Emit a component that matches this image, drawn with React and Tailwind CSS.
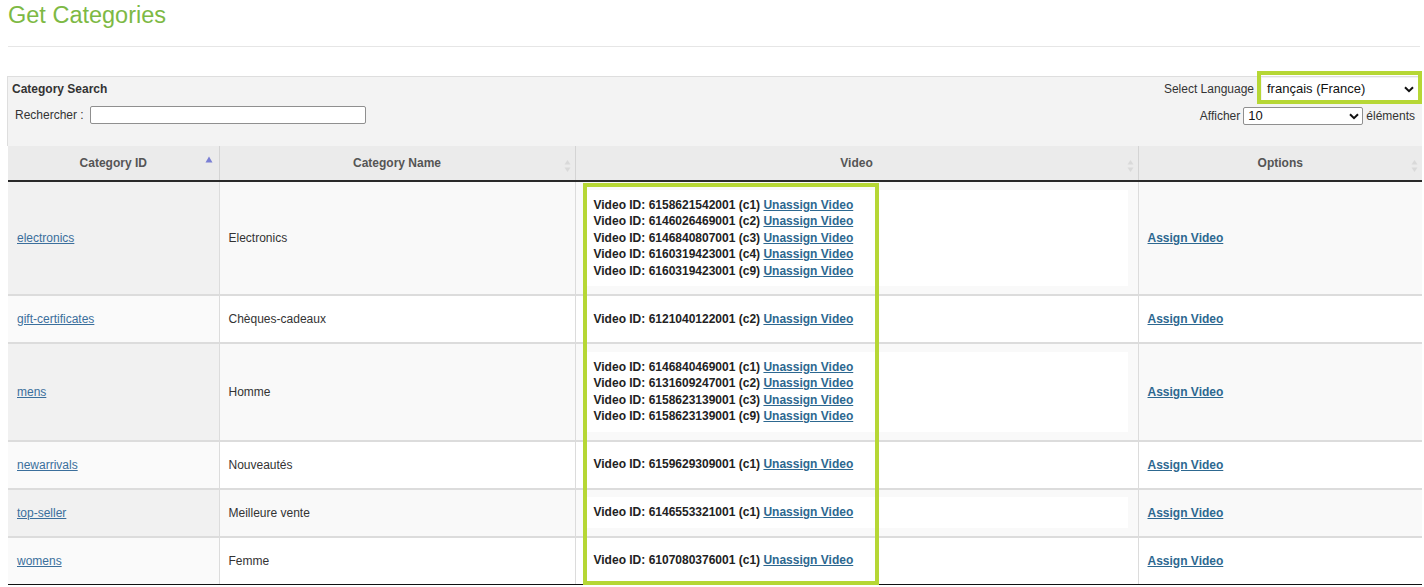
import React from 'react';

const rows = [
  { id: 'electronics', name: 'Electronics', videos: [['6158621542001', 'c1'], ['6146026469001', 'c2'], ['6146840807001', 'c3'], ['6160319423001', 'c4'], ['6160319423001', 'c9']] },
  { id: 'gift-certificates', name: 'Chèques-cadeaux', videos: [['6121040122001', 'c2']] },
  { id: 'mens', name: 'Homme', videos: [['6146840469001', 'c1'], ['6131609247001', 'c2'], ['6158623139001', 'c3'], ['6158623139001', 'c9']] },
  { id: 'newarrivals', name: 'Nouveautés', videos: [['6159629309001', 'c1']] },
  { id: 'top-seller', name: 'Meilleure vente', videos: [['6146553321001', 'c1']] },
  { id: 'womens', name: 'Femme', videos: [['6107080376001', 'c1']] },
];

function Chevron({ className }) {
  return (
    <svg className={className} width="10" height="7" viewBox="0 0 10 7">
      <path d="M1 1.2 L5 5.2 L9 1.2" fill="none" stroke="#111" strokeWidth="2" />
    </svg>
  );
}

function SortBoth() {
  return (
    <svg width="7" height="14" viewBox="0 0 7 14" className="absolute right-[4px] top-[13px]">
      <path d="M3.5 1 L6.5 5.5 L0.5 5.5 Z" fill="#d9d9d9" />
      <path d="M3.5 13 L6.5 8.5 L0.5 8.5 Z" fill="#d9d9d9" />
    </svg>
  );
}

function SortAsc() {
  return (
    <svg width="8" height="7" viewBox="0 0 8 7" className="absolute right-[6px] top-[10px]">
      <path d="M4 0.5 L7.5 6.5 L0.5 6.5 Z" fill="#7a7fd4" />
    </svg>
  );
}

export default function App() {
  return (
    <div className="relative w-[1424px] h-[587px] overflow-hidden bg-white font-['Liberation_Sans',Arial,sans-serif] text-[12px] text-[#333]">
      <h1 className="px-2 pt-[1px] text-[23.5px] leading-[28px] text-[#7db944]">Get Categories</h1>
      <div className="ml-2 mr-[4px] mt-[17px] border-t border-[#e6e6e6]" />

      <div className="ml-[7px] mt-[29px] w-[1415px]">
        <div className="flex h-[70px] justify-between border-l border-t border-[#dedede] bg-[#f3f3f3]">
          <div className="flex flex-col">
            <div className="pl-[4px] pt-[5px] font-bold leading-[14px] text-[#333]">Category Search</div>
            <div className="mt-[10px] flex items-center pl-[7px]">
              <span className="text-[#333]">Rechercher :</span>
              <div className="ml-[6px] h-[18px] w-[276px] rounded-[2px] border border-[#8f8f8f] bg-white" />
            </div>
          </div>
          <div className="flex flex-col items-end">
            <div className="mt-[1px] flex items-center pr-[4px]">
              <span className="mr-[8px]">Select Language</span>
              <div className="flex h-[22px] w-[156px] items-center justify-between bg-white pl-[5px] pr-[4px] text-[13px] text-[#111]">
                <span>français (France)</span>
                <Chevron />
              </div>
            </div>
            <div className="mt-[7px] flex items-center pr-[7px]">
              <span className="mr-[3px]">Afficher</span>
              <div className="flex h-[18px] w-[120px] items-center justify-between rounded-[2px] border border-[#8f8f8f] bg-white pl-[4px] pr-[3px] text-[13px] text-[#111]">
                <span>10</span>
                <Chevron />
              </div>
              <span className="ml-[3px]">éléments</span>
            </div>
          </div>
        </div>

        <table className="ml-px w-[1414px] table-fixed border-collapse">
          <colgroup>
            <col className="w-[211px]" />
            <col className="w-[356px]" />
            <col className="w-[563px]" />
            <col className="w-[284px]" />
          </colgroup>
          <thead>
            <tr>
              <th className="relative h-[35px] border-b-2 border-r border-b-[#2a2a2a] border-r-[#d4d4d4] bg-[#ebebeb] text-center font-bold text-[#555]">
                Category ID
                <SortAsc />
              </th>
              <th className="relative h-[35px] border-b-2 border-r border-b-[#2a2a2a] border-r-[#d4d4d4] bg-[#ebebeb] text-center font-bold text-[#555]">
                Category Name
                <SortBoth />
              </th>
              <th className="relative h-[35px] border-b-2 border-r border-b-[#2a2a2a] border-r-[#d4d4d4] bg-[#ebebeb] text-center font-bold text-[#555]">
                Video
                <SortBoth />
              </th>
              <th className="relative h-[35px] border-b-2 border-b-[#2a2a2a] bg-[#ebebeb] text-center font-bold text-[#555]">
                Options
                <SortBoth />
              </th>
            </tr>
          </thead>
          <tbody>
            {rows.map((r, i) => {
              const odd = i % 2 === 0;
              const last = i === rows.length - 1;
              const rowB = (i > 0 ? 'border-t-2 border-t-[#dcdcdc] ' : '') + (last ? 'border-b border-b-[#111] ' : '');
              return (
                <tr key={r.id}>
                  <td className={rowB + 'border-r border-r-[#dcdcdc] px-[9px] align-middle ' + (odd ? 'bg-[#f1f1f1]' : 'bg-[#fafafa]')}>
                    <a className="text-[#3b6f9c] underline">{r.id}</a>
                  </td>
                  <td className={rowB + 'border-r border-r-[#dcdcdc] px-[9px] align-middle ' + (odd ? 'bg-[#f9f9f9]' : 'bg-white')}>
                    {r.name}
                  </td>
                  <td className={rowB + 'border-r border-r-[#dcdcdc] pl-[8px] pr-[10px] py-[7.75px] align-middle ' + (odd ? 'bg-[#f9f9f9]' : 'bg-white')}>
                    <div className="bg-white px-[10px] py-[7px] font-bold leading-[16.5px] text-[#222]">
                      {r.videos.map(([vid, c], k) => (
                        <div key={k}>
                          Video ID: {vid} ({c}) <a className="text-[#2d6890] underline">Unassign Video</a>
                        </div>
                      ))}
                    </div>
                  </td>
                  <td className={rowB + 'px-[9px] align-middle ' + (odd ? 'bg-[#f9f9f9]' : 'bg-white')}>
                    <a className="font-bold text-[#2d6890] underline">Assign Video</a>
                  </td>
                </tr>
              );
            })}
          </tbody>
        </table>
      </div>

      <div className="pointer-events-none absolute left-[1257px] top-[71px] h-[33px] w-[165px] border-4 border-[#b6d735]" />
      <div className="pointer-events-none absolute left-[583px] top-[183px] h-[402px] w-[296px] border-4 border-[#b6d735]" />
    </div>
  );
}
